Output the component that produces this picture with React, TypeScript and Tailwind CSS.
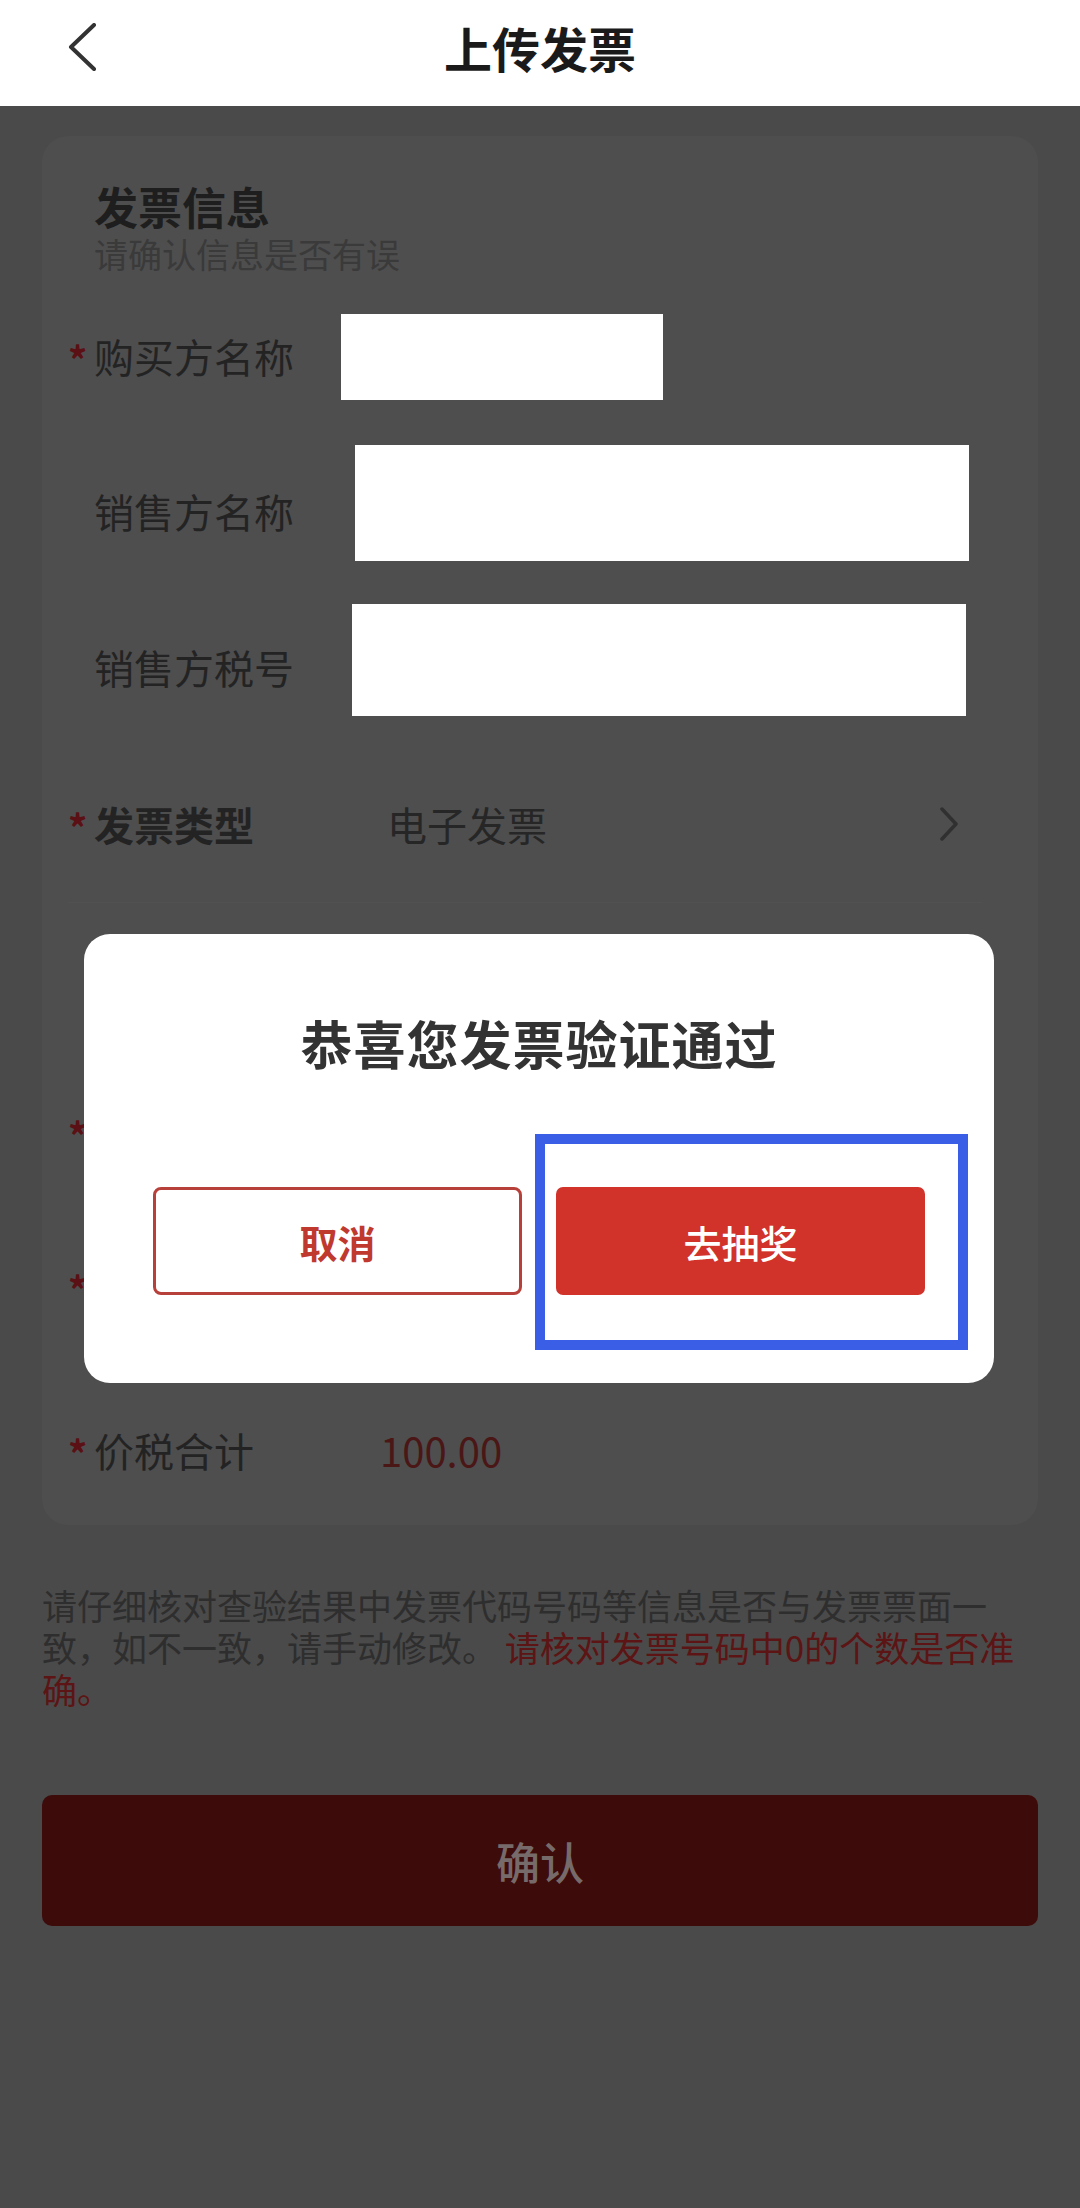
import React from 'react';

const FONT = 'font-["Noto_Sans_CJK_SC","Noto_Sans",sans-serif]';

// Form row on the dimmed card
interface RowProps {
  label?: string;
  required?: boolean;
  bold?: boolean;
  className?: string;
  children?: React.ReactNode;
}

function FormRow({ label, required, bold, className, children }: RowProps) {
  return (
    <div className={`flex items-center ${className ?? ''}`}>
      <span className="w-[26px] text-[38px] leading-[40px] font-bold text-[#5a1014] pt-[6px]">
        {required ? '*' : ''}
      </span>
      <span
        className={`w-[247px] shrink-0 text-[40px] leading-[48px] text-[#232323] ${
          bold ? 'font-semibold' : ''
        }`}
      >
        {label}
      </span>
      {children}
    </div>
  );
}

function BackIcon() {
  return (
    <svg width="30" height="48" viewBox="0 0 30 48" fill="none">
      <polyline
        points="27,2 4,24 27,46"
        stroke="#333"
        strokeWidth="4"
        strokeLinecap="round"
        strokeLinejoin="round"
      />
    </svg>
  );
}

function ArrowRight() {
  return (
    <svg width="20" height="34" viewBox="0 0 20 34" fill="none">
      <polyline
        points="3,2 17,17 3,32"
        stroke="#303030"
        strokeWidth="3.5"
        strokeLinecap="round"
        strokeLinejoin="round"
      />
    </svg>
  );
}

export default function App() {
  return (
    <div className={`relative w-[1080px] h-[2208px] bg-[#4a4a4a] ${FONT}`}>
      {/* Header */}
      <header className="h-[106px] bg-white grid grid-cols-[1fr_auto_1fr] items-center pb-[12px]">
        <div className="pl-[67px] flex items-center">
          <BackIcon />
        </div>
        <h1 className="text-[48px] leading-[56px] font-bold text-[#1a1a1a]">上传发票</h1>
        <div />
      </header>

      <main className="px-[42px] pt-[30px]">
        {/* Invoice card */}
        <section className="h-[1389px] bg-[#4e4e4e] rounded-[26px] pl-[26px] pt-[44px]">
          <div className="pl-[26px]">
            <h2 className="text-[44px] leading-[52px] font-bold text-[#1e1e1e]">发票信息</h2>
            <p className="mt-[2px] text-[34px] leading-[40px] text-[#3a3a3a]">请确认信息是否有误</p>
          </div>

          <div className="mt-[4px]">
            <FormRow label="购买方名称" required className="h-[155px]">
              <div className="w-[322px] h-[86px] bg-white mt-[3px]" />
            </FormRow>
            <FormRow label="销售方名称" className="h-[155px]">
              <div className="ml-[14px] w-[614px] h-[116px] bg-white mb-[16px]" />
            </FormRow>
            <FormRow label="销售方税号" className="h-[157px]">
              <div className="ml-[11px] w-[614px] h-[112px] bg-white mb-[14px]" />
            </FormRow>
            <FormRow label="发票类型" required bold className="h-[158px] border-b border-[#515151] mr-[56px]">
              <span className="ml-[46px] text-[40px] leading-[48px] text-[#262626]">电子发票</span>
              <span className="ml-auto mr-[23px] flex">
                <ArrowRight />
              </span>
            </FormRow>
            {/* rows hidden behind the dialog */}
            <FormRow className="h-[152px]" />
            <FormRow required className="h-[153px]" />
            <FormRow required className="h-[156px]" />
            <FormRow label="价税合计" required className="h-[161px] pt-[10px]">
              <span className="ml-[39px] text-[40px] leading-[48px] text-[#4a1616]">100.00</span>
            </FormRow>
          </div>
        </section>

        {/* Notice */}
        <p className="mt-[59px] w-[975px] text-[35px] leading-[42px] text-[#2e2e2e]">
          请仔细核对查验结果中发票代码号码等信息是否与发票票面一致，如不一致，请手动修改。{' '}
          <span className="text-[#5c1414]">请核对发票号码中0的个数是否准确。</span>
        </p>

        <button className="mt-[85px] w-full h-[131px] rounded-[10px] bg-[#3e0b0b] text-[44px] font-medium text-[#766a6a] flex items-center justify-center">
          确认
        </button>
      </main>

      {/* Success dialog */}
      <div className="absolute left-[84px] top-[934px] w-[910px] h-[449px] bg-white rounded-[26px] flex flex-col items-center pt-[79px]">
        <h3 className="text-[52px] leading-[60px] font-semibold text-[#333] tracking-[1px]">
          恭喜您发票验证通过
        </h3>
        <div className="mt-[114px] flex gap-[34px]">
          <button className="w-[369px] h-[108px] rounded-[8px] border-[3px] border-[#b8403a] text-[38px] font-semibold text-[#c0392f] flex items-center justify-center">
            取消
          </button>
          <button className="w-[369px] h-[108px] rounded-[7px] bg-[#d1322a] text-[38px] font-medium text-white flex items-center justify-center">
            去抽奖
          </button>
        </div>
        {/* highlight annotation */}
        <div className="absolute left-[451px] top-[200px] w-[433px] h-[216px] border-[10px] border-[#3b5ee6]" />
      </div>
    </div>
  );
}
